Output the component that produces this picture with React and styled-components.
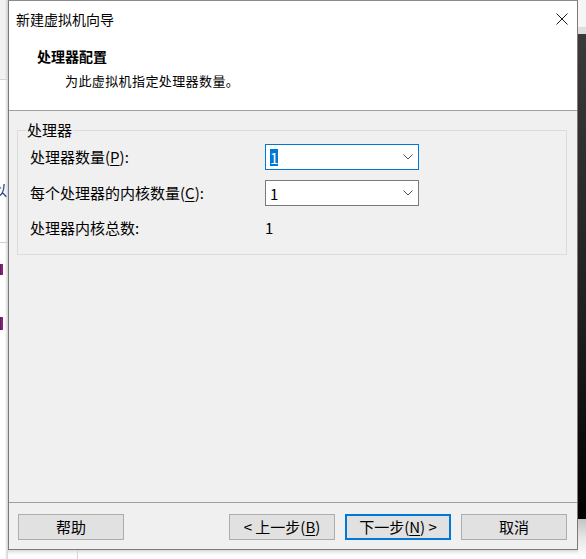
import React from "react";
import styled, { createGlobalStyle, css } from "styled-components";

const Global = createGlobalStyle`
  html, body { margin: 0; padding: 0; background: #ffffff; }
  body {
    font-family: "Noto Sans CJK SC", "Microsoft YaHei", sans-serif;
    color: #000;
    overflow: hidden;
  }
  * { box-sizing: border-box; }
`;

const Page = styled.div`
  display: flex;
  width: 586px;
  height: 559px;
  overflow: hidden;
`;

/* ---------- background windows ---------- */
const LeftStrip = styled.div`
  width: 8px;
  height: 559px;
  display: flex;
  flex-direction: column;
  overflow: hidden;
  background: linear-gradient(to right, #ffffff 0, #ffffff 5px, #ececec 6px, #d2d2d2 8px);
`;

const StripTop = styled.div`
  height: 80px;
  background: linear-gradient(to right, #f2f2f2 0, #f2f2f2 5px, #e4e4e4 6px, #cfcfcf 8px);
  border-bottom: 1px solid #d4d4d4;
  flex-shrink: 0;
`;

const Spacer = styled.div`
  height: ${(p) => p.$h}px;
  flex-shrink: 0;
`;

const Fragment = styled.div`
  height: 16px;
  margin-left: -8px;
  font-size: 15px;
  line-height: 16px;
  color: #1d3b7a;
  white-space: nowrap;
  flex-shrink: 0;
`;

const HLine = styled.div`
  height: 1px;
  background: #d0d0d0;
  flex-shrink: 0;
`;

const MagentaBar = styled.div`
  width: 3px;
  height: ${(p) => p.$h}px;
  background: #a01a63;
  border-left: 1px solid #3a2a8a;
  flex-shrink: 0;
`;

const CenterCol = styled.div`
  width: 570px;
  display: flex;
  flex-direction: column;
`;

const BottomStrip = styled.div`
  height: 9px;
  background: linear-gradient(to bottom, #d9d9d9 0, #f4f4f4 3px, #ffffff 6px);
  display: flex;
`;

const BottomLine = styled.div`
  margin-left: 69px;
  width: 1px;
  background: #d4d4d4;
`;

const RightStrip = styled.div`
  width: 8px;
  height: 559px;
  display: flex;
  flex-direction: column;
`;

const RightTop = styled.div`
  height: 27px;
  background: #f6f6f6;
`;

const RightBand = styled.div`
  height: 7px;
  background: #dedede;
`;

const RightDark = styled.div`
  height: 485px;
  background: linear-gradient(to bottom, #3a3a3a 0, #1e1e1e 60%, #000000 100%);
`;

const RightShadow = styled.div`
  flex: 1;
  background: linear-gradient(to bottom, #c4c4c4 0, #e8e8e8 50%, #ffffff 100%);
`;

/* ---------- dialog ---------- */
const Dialog = styled.div`
  width: 570px;
  height: 550px;
  border: 1px solid #7a7a7a;
  border-top-color: #8a8a8a;
  display: flex;
  flex-direction: column;
  background: #f0f0f0;
`;

const Header = styled.div`
  height: 110px;
  flex-shrink: 0;
  background: #ffffff;
  border-bottom: 1px solid #a0a0a0;
  display: flex;
  flex-direction: column;
`;

const TitleRow = styled.div`
  height: 36px;
  display: flex;
  align-items: center;
  padding-left: 7px;
`;

const TitleText = styled.div`
  font-size: 14px;
  line-height: 18px;
  color: #000;
`;

const CloseIcon = styled.svg`
  margin-left: auto;
  margin-right: 9px;
  width: 12px;
  height: 12px;
`;

const HeaderTitle = styled.div`
  margin-top: 10px;
  padding-left: 28px;
  font-size: 14px;
  font-weight: 700;
  line-height: 18px;
`;

const HeaderSub = styled.div`
  margin-top: 7px;
  padding-left: 56px;
  font-size: 13px;
  letter-spacing: 0.4px;
  line-height: 18px;
`;

const Body = styled.div`
  flex: 1;
  padding: 19px 10px 0 8px;
`;

const Group = styled.div`
  position: relative;
  height: 125px;
  border: 1px solid #dcdcdc;
  padding: 13px 0 0 12px;
`;

const Legend = styled.div`
  position: absolute;
  top: -11px;
  left: 8px;
  padding: 0 1px;
  background: #f0f0f0;
  font-size: 15px;
  line-height: 20px;
`;

const Form = styled.div`
  display: grid;
  grid-template-columns: 235px 154px;
  grid-auto-rows: 26px;
  row-gap: 10px;
  align-items: center;
`;

const Label = styled.div`
  font-size: 15px;
  line-height: 20px;
  white-space: nowrap;
  ${(p) =>
    p.$raised &&
    css`
      margin-top: -2px;
    `}
`;

const U = styled.span`
  text-decoration: underline;
  text-underline-offset: 2px;
`;

const Combo = styled.div`
  width: 154px;
  height: 26px;
  background: #ffffff;
  border: 1px solid ${(p) => (p.$focused ? "#0078d7" : "#7a7a7a")};
  display: flex;
  align-items: center;
  padding-left: 4px;
  font-size: 15px;
`;

const ComboValue = styled.span`
  line-height: 17px;
  height: 17px;
  ${(p) =>
    p.$selected &&
    css`
      background: #0078d7;
      color: #ffffff;
    `}
`;

const Chevron = styled.svg`
  margin-left: auto;
  margin-right: 5px;
  width: 10px;
  height: 6px;
`;

const Value = styled.div`
  font-size: 15px;
  line-height: 20px;
  margin-top: -2px;
`;

const Footer = styled.div`
  height: 47px;
  flex-shrink: 0;
  border-top: 1px solid #a0a0a0;
  display: flex;
  align-items: flex-start;
  padding: 11px 10px 0 9px;
  gap: 10px;
`;

const Button = styled.button`
  width: 106px;
  height: 26px;
  margin: 0;
  padding: 0;
  background: #e1e1e1;
  border: ${(p) => (p.$default ? "2px solid #0078d7" : "1px solid #adadad")};
  font-family: inherit;
  font-size: 15px;
  line-height: 20px;
  color: #000;
  display: flex;
  align-items: center;
  justify-content: center;
  white-space: pre;
  ${(p) =>
    p.$pushRight &&
    css`
      margin-right: auto;
    `}
`;

const ChevronDown = () => (
  <Chevron viewBox="0 0 10 6">
    <path d="M0.5 0.5 L5 5 L9.5 0.5" fill="none" stroke="#505050" strokeWidth="1" />
  </Chevron>
);

export default function App() {
  return (
    <>
      <Global />
      <Page>
        <LeftStrip>
          <StripTop />
          <Spacer $h={102} />
          <Fragment>以</Fragment>
          <Spacer $h={44} />
          <HLine />
          <Spacer $h={21} />
          <MagentaBar $h={11} />
          <Spacer $h={42} />
          <MagentaBar $h={13} />
        </LeftStrip>

        <CenterCol>
          <Dialog>
            <Header>
              <TitleRow>
                <TitleText>新建虚拟机向导</TitleText>
                <CloseIcon viewBox="0 0 12 12">
                  <path d="M0.5 0.5 L11.5 11.5 M11.5 0.5 L0.5 11.5" stroke="#1a1a1a" strokeWidth="1" fill="none" />
                </CloseIcon>
              </TitleRow>
              <HeaderTitle>处理器配置</HeaderTitle>
              <HeaderSub>为此虚拟机指定处理器数量。</HeaderSub>
            </Header>

            <Body>
              <Group>
                <Legend>处理器</Legend>
                <Form>
                  <Label>
                    处理器数量(<U>P</U>):
                  </Label>
                  <Combo $focused>
                    <ComboValue $selected>1</ComboValue>
                    <ChevronDown />
                  </Combo>

                  <Label>
                    每个处理器的内核数量(<U>C</U>):
                  </Label>
                  <Combo>
                    <ComboValue>1</ComboValue>
                    <ChevronDown />
                  </Combo>

                  <Label $raised>处理器内核总数:</Label>
                  <Value>1</Value>
                </Form>
              </Group>
            </Body>

            <Footer>
              <Button $pushRight>帮助</Button>
              <Button>
                {"< 上一步("}
                <U>B</U>
                {")"}
              </Button>
              <Button $default>
                {"下一步("}
                <U>N</U>
                {") >"}
              </Button>
              <Button>取消</Button>
            </Footer>
          </Dialog>
          <BottomStrip>
            <BottomLine />
          </BottomStrip>
        </CenterCol>

        <RightStrip>
          <RightTop />
          <RightBand />
          <RightDark />
          <RightShadow />
        </RightStrip>
      </Page>
    </>
  );
}
